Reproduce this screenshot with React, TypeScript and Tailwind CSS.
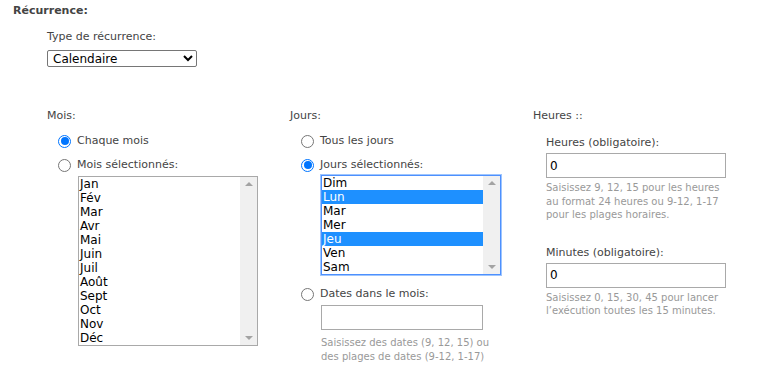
/**
 * Recurrence settings panel
 */

import React from 'react';

const MONTHS = ['Jan', 'Fév', 'Mar', 'Avr', 'Mai', 'Juin', 'Juil', 'Août', 'Sept', 'Oct', 'Nov', 'Déc'];
const DAYS = ['Dim', 'Lun', 'Mar', 'Mer', 'Jeu', 'Ven', 'Sam'];
const SELECTED_DAYS = ['Lun', 'Jeu'];

function Radio({ checked, label }: { checked?: boolean; label: string }) {
  return (
    <label className="flex items-center h-[24px] pl-[11px]">
      <span
        className={
          checked
            ? 'w-[13px] h-[13px] rounded-full border border-[#0075ff] bg-white flex items-center justify-center'
            : 'w-[13px] h-[13px] rounded-full border border-[#767676] bg-white'
        }
      >
        {checked && <span className="w-[8px] h-[8px] rounded-full bg-[#0075ff]" />}
      </span>
      <span className="ml-[6px]">{label}</span>
    </label>
  );
}

function Scrollbar() {
  return (
    <div className="w-[17px] bg-[#f0f0f0] flex flex-col justify-between items-center py-[5px]">
      <span className="w-0 h-0 border-l-[4px] border-r-[4px] border-b-[4px] border-l-transparent border-r-transparent border-b-[#a3a3a3]" />
      <span className="w-0 h-0 border-l-[4px] border-r-[4px] border-t-[4px] border-l-transparent border-r-transparent border-t-[#a3a3a3]" />
    </div>
  );
}

function ListBox({ items, selected = [], focused }: { items: string[]; selected?: string[]; focused?: boolean }) {
  return (
    <div
      className={
        focused
          ? 'flex w-[180px] border border-[#4d90fe] outline outline-1 outline-[#9ec5fe] bg-white'
          : 'flex w-[180px] border border-[#a9a9a9] bg-white'
      }
    >
      <div className="flex-1 flex flex-col text-[12px] text-black">
        {items.map((item) => (
          <div
            key={item}
            className={
              selected.includes(item)
                ? 'h-[14px] leading-[14px] pl-[1px] bg-[#1e90ff] text-white'
                : 'h-[14px] leading-[14px] pl-[1px]'
            }
          >
            {item}
          </div>
        ))}
      </div>
      <Scrollbar />
    </div>
  );
}

function TextInput({ value, width = 'w-[180px]' }: { value?: string; width?: string }) {
  return (
    <div className={`${width} h-[25px] border border-[#a9a9a9] bg-white px-[3px] flex items-center text-[12px] text-black`}>
      {value}
    </div>
  );
}

export default function App() {
  return (
    <div className="w-[763px] h-[368px] bg-white pl-[13px] pt-[4px] text-[11px] leading-[14px] text-[#444] font-['DejaVu_Sans',sans-serif]">
      {/* Header */}
      <div className="font-bold">Récurrence:</div>

      <div className="ml-[34px] mt-[12px]">
        <div>Type de récurrence:</div>
        <select
          defaultValue="cal"
          className="mt-[6px] w-[150px] h-[17px] border border-[#767676] rounded-[2px] text-[12px] text-black bg-white px-[1px]"
        >
          <option value="cal">Calendaire</option>
        </select>
      </div>

      {/* Columns */}
      <div className="ml-[34px] mt-[42px] grid grid-cols-[243px_243px_200px]">
        {/* Mois */}
        <div>
          <div>Mois:</div>
          <div className="mt-[6px]">
            <Radio checked label="Chaque mois" />
            <Radio label="Mois sélectionnés:" />
          </div>
          <div className="ml-[31px] mt-[-1px]">
            <ListBox items={MONTHS} />
          </div>
        </div>

        {/* Jours */}
        <div>
          <div>Jours:</div>
          <div className="mt-[6px]">
            <Radio label="Tous les jours" />
            <Radio checked label="Jours sélectionnés:" />
          </div>
          <div className="ml-[31px] mt-[-2px]">
            <ListBox items={DAYS} selected={SELECTED_DAYS} focused />
          </div>
          <div className="mt-[7px]">
            <Radio label="Dates dans le mois:" />
          </div>
          <div className="ml-[31px] mt-[-1px]">
            <TextInput width="w-[162px]" />
            <div className="mt-[6px] text-[10px] leading-[14px] text-[#999]">
              Saisissez des dates (9, 12, 15) ou
              <br />
              des plages de dates (9-12, 1-17)
            </div>
          </div>
        </div>

        {/* Heures */}
        <div>
          <div>Heures ::</div>
          <div className="ml-[13px] mt-[13px]">
            <div>Heures (obligatoire):</div>
            <div className="mt-[3px]">
              <TextInput value="0" />
            </div>
            <div className="mt-[3px] text-[10px] leading-[13.5px] text-[#999]">
              Saisissez 9, 12, 15 pour les heures
              <br />
              au format 24 heures ou 9-12, 1-17
              <br />
              pour les plages horaires.
            </div>

            <div className="mt-[24px]">Minutes (obligatoire):</div>
            <div className="mt-[3px]">
              <TextInput value="0" />
            </div>
            <div className="mt-[3px] text-[10px] leading-[13.5px] text-[#999]">
              Saisissez 0, 15, 30, 45 pour lancer
              <br />
              l’exécution toutes les 15 minutes.
            </div>
          </div>
        </div>
      </div>
    </div>
  );
}
